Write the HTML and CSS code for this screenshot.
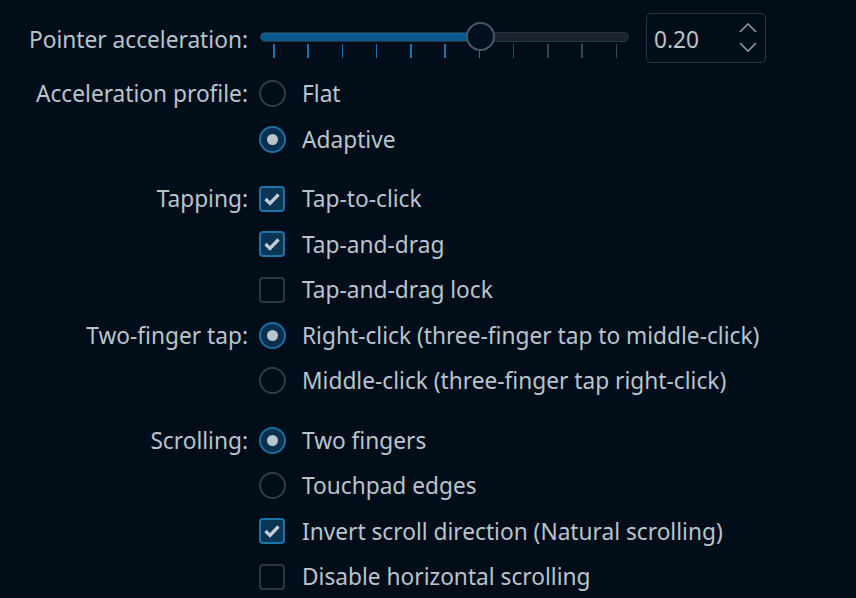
FILE: index.html
```html
<!DOCTYPE html>
<html>
<head>
<meta charset="utf-8">
<link rel="stylesheet" href="styles.css">
</head>
<body>
<div class="form">
  <div class="field field-slider">
    <div class="label">Pointer acceleration:</div>
    <div class="slider-row">
      <div class="slider">
        <div class="track"><div class="fill"></div></div>
        <div class="ticks">
          <span class="tick on"></span><span class="tick on"></span><span class="tick on"></span><span class="tick on"></span><span class="tick on"></span><span class="tick on"></span><span class="tick on"></span><span class="tick"></span><span class="tick"></span><span class="tick"></span><span class="tick"></span>
        </div>
        <div class="handle"></div>
      </div>
      <div class="spin">
        <span class="spin-value">0.20</span>
        <svg class="spin-arrows" width="18" height="30" viewBox="0 0 18 30">
          <polyline points="1,9 9,1 17,9" fill="none" stroke="#8c97a3" stroke-width="1.6"/>
          <polyline points="1,20 9,28 17,20" fill="none" stroke="#8c97a3" stroke-width="1.6"/>
        </svg>
      </div>
    </div>
  </div>

  <div class="field">
    <div class="label">Acceleration profile:</div>
    <div class="options">
      <div class="opt"><span class="radio"></span><span>Flat</span></div>
      <div class="opt"><span class="radio checked"></span><span>Adaptive</span></div>
    </div>
  </div>

  <div class="field group">
    <div class="label">Tapping:</div>
    <div class="options">
      <div class="opt"><span class="check checked"><svg width="26" height="26" viewBox="0 0 26 26"><polyline points="6.5,13 11,17.5 19.5,8.5" fill="none" stroke="#c3ccd4" stroke-width="3.3"/></svg></span><span>Tap-to-click</span></div>
      <div class="opt"><span class="check checked"><svg width="26" height="26" viewBox="0 0 26 26"><polyline points="6.5,13 11,17.5 19.5,8.5" fill="none" stroke="#c3ccd4" stroke-width="3.3"/></svg></span><span>Tap-and-drag</span></div>
      <div class="opt"><span class="check"></span><span>Tap-and-drag lock</span></div>
    </div>
  </div>

  <div class="field">
    <div class="label">Two-finger tap:</div>
    <div class="options">
      <div class="opt"><span class="radio checked"></span><span>Right-click (three-finger tap to middle-click)</span></div>
      <div class="opt"><span class="radio"></span><span>Middle-click (three-finger tap right-click)</span></div>
    </div>
  </div>

  <div class="field group">
    <div class="label">Scrolling:</div>
    <div class="options">
      <div class="opt"><span class="radio checked"></span><span>Two fingers</span></div>
      <div class="opt"><span class="radio"></span><span>Touchpad edges</span></div>
      <div class="opt"><span class="check checked"><svg width="26" height="26" viewBox="0 0 26 26"><polyline points="6.5,13 11,17.5 19.5,8.5" fill="none" stroke="#c3ccd4" stroke-width="3.3"/></svg></span><span>Invert scroll direction (Natural scrolling)</span></div>
      <div class="opt"><span class="check"></span><span>Disable horizontal scrolling</span></div>
    </div>
  </div>
</div>
</body>
</html>
```

FILE: styles.css
```css
html, body {
  margin: 0;
  padding: 0;
  background: #020d1a;
  height: 100%;
  overflow: hidden;
}

body {
  font-family: "Noto Sans", "DejaVu Sans", sans-serif;
  font-size: 22.7px;
  color: #b9c4cc;
}

.form {
  padding-top: 13px;
  display: flex;
  flex-direction: column;
}

.field {
  display: grid;
  grid-template-columns: 248px 1fr;
  column-gap: 11px;
}

.field.group {
  margin-top: 14px;
}

.field-slider {
  margin-bottom: 8px;
}

.label {
  height: 45.5px;
  display: flex;
  align-items: center;
  justify-content: flex-end;
  white-space: nowrap;
}

.field-slider .label {
  height: 50px;
  padding-top: 3px;
  box-sizing: border-box;
}

.options {
  display: flex;
  flex-direction: column;
}

.opt {
  height: 45.5px;
  display: flex;
  align-items: center;
  gap: 16px;
  white-space: nowrap;
}

.radio {
  width: 27px;
  height: 27px;
  box-sizing: border-box;
  border-radius: 50%;
  border: 2px solid #333c46;
  flex: none;
  display: flex;
  align-items: center;
  justify-content: center;
}

.radio.checked {
  border-color: #1b6fa5;
  background: #0a304d;
}

.radio.checked::after {
  content: "";
  width: 11px;
  height: 11px;
  border-radius: 50%;
  background: #b9c4cc;
}

.check {
  width: 26px;
  height: 26px;
  box-sizing: border-box;
  border-radius: 4px;
  border: 2px solid #2e3741;
  flex: none;
  position: relative;
  margin-right: 1px;
}

.check.checked {
  border-color: #1d74ab;
  background: #0b3555;
}

.check svg {
  position: absolute;
  left: -2px;
  top: -2px;
}

/* slider */
.slider-row {
  display: flex;
  align-items: center;
  gap: 15px;
  height: 50px;
}

.slider {
  position: relative;
  width: 372px;
  height: 50px;
}

.track {
  position: absolute;
  left: 1px;
  right: 2px;
  top: 19px;
  height: 10px;
  box-sizing: border-box;
  border-radius: 5px;
  background: #1b242e;
  border: 1.5px solid #2b343e;
  overflow: hidden;
}

.fill {
  width: 59%;
  background: #08598c;
  box-shadow: inset 0 0 0 1.5px #1677b3;
  margin: -1.5px;
  height: calc(100% + 3px);
  border-radius: 5px 0 0 5px;
}

.ticks {
  position: absolute;
  left: 14px;
  right: 14px;
  top: 31px;
  height: 14px;
  display: flex;
  justify-content: space-between;
}

.tick {
  width: 1.5px;
  height: 14px;
  background: #3a4550;
}

.tick.on {
  background: #1b74ad;
}

.handle {
  position: absolute;
  left: 207px;
  top: 9px;
  width: 29px;
  height: 29px;
  box-sizing: border-box;
  border-radius: 50%;
  background: #03101d;
  border: 2px solid #4b5662;
}

.spin {
  width: 120px;
  height: 50px;
  box-sizing: border-box;
  border: 1.5px solid #2d3640;
  border-radius: 5px;
  display: flex;
  align-items: center;
  justify-content: space-between;
  padding: 0 8px 0 7px;
}

.spin-value {
  color: #b9c4cc;
  padding-top: 2px;
}

.spin-arrows {
  display: block;
}
```
